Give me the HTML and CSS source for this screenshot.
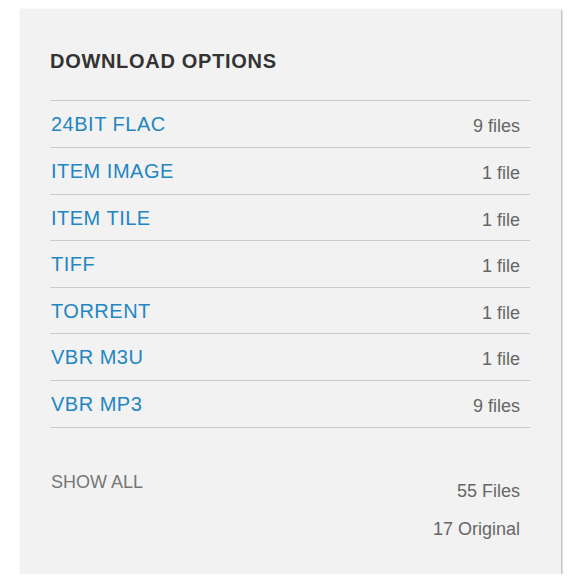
FILE: index.html
```html
<!DOCTYPE html>
<html>
<head>
<meta charset="utf-8">
<link rel="stylesheet" href="styles.css">
</head>
<body>
<section class="panel">
  <h5 class="title">DOWNLOAD OPTIONS</h5>
  <div class="list">
    <div class="row"><a class="fmt" href="#">24BIT FLAC</a><span class="count">9 files</span></div>
    <div class="row"><a class="fmt" href="#">ITEM IMAGE</a><span class="count">1 file</span></div>
    <div class="row"><a class="fmt" href="#">ITEM TILE</a><span class="count">1 file</span></div>
    <div class="row"><a class="fmt" href="#">TIFF</a><span class="count">1 file</span></div>
    <div class="row"><a class="fmt" href="#">TORRENT</a><span class="count">1 file</span></div>
    <div class="row"><a class="fmt" href="#">VBR M3U</a><span class="count">1 file</span></div>
    <div class="row"><a class="fmt" href="#">VBR MP3</a><span class="count">9 files</span></div>
  </div>
  <div class="footer">
    <a class="showall" href="#">SHOW ALL</a>
    <div class="totals">
      <span>55 Files</span>
      <span>17 Original</span>
    </div>
  </div>
</section>
</body>
</html>
```
FILE: styles.css
```css
html, body {
  margin: 0;
  padding: 0;
  background: #ffffff;
}
body {
  font-family: "Liberation Sans", Arial, sans-serif;
  padding: 9px 0 0 20px;
}
.panel {
  width: 541px;
  height: 565px;
  box-sizing: border-box;
  background: #f2f2f2;
  box-shadow: 1px 1px 2px rgba(0, 0, 0, 0.35);
  padding: 40px 31px 0 30px;
}
.title {
  margin: 0;
  font-size: 20px;
  font-weight: bold;
  letter-spacing: 0.7px;
  line-height: 24px;
  color: #333333;
  height: 51px;
}
.list {
  border-bottom: 1px solid #cccccc;
}
.row {
  display: flex;
  justify-content: space-between;
  align-items: flex-start;
  height: 47px;
  box-sizing: border-box;
  border-top: 1px solid #cccccc;
  padding: 0 10px 0 1px;
}
.row:nth-child(3),
.row:nth-child(5) {
  height: 46px;
}
.fmt {
  font-size: 20px;
  letter-spacing: 0.5px;
  line-height: 24px;
  margin-top: 11px;
  color: #2286c3;
  text-decoration: none;
}
.count {
  font-size: 18px;
  line-height: 20px;
  margin-top: 15px;
  color: #666666;
}
.footer {
  display: flex;
  justify-content: space-between;
  padding: 44px 10px 0 1px;
}
.showall {
  font-size: 18px;
  line-height: 20px;
  color: #777777;
  text-decoration: none;
}
.totals {
  display: flex;
  flex-direction: column;
  align-items: flex-end;
  gap: 18px;
  padding-top: 9px;
  font-size: 18px;
  line-height: 20px;
  color: #666666;
}
```
